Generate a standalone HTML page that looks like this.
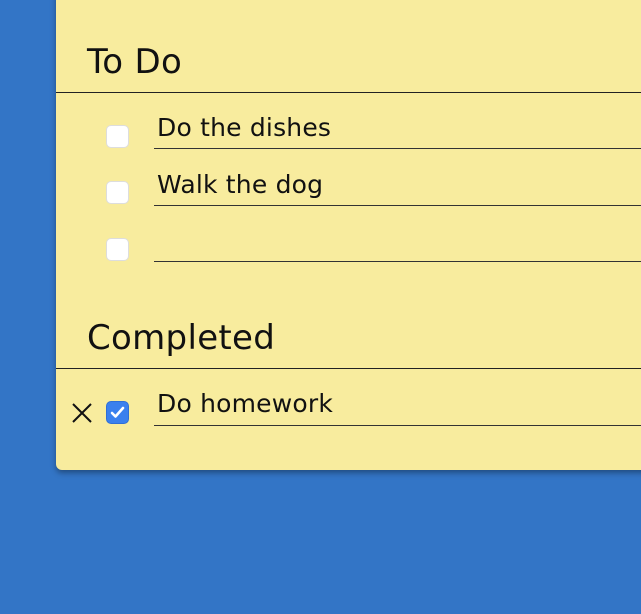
<!DOCTYPE html>
<html><head><style>
body{margin:0;width:641px;height:614px;background:#3375c6;overflow:hidden;position:relative;font-family:"DejaVu Sans",sans-serif;color:#111;}
.panel{position:absolute;left:56px;top:-10px;width:600px;height:480px;background:#f8ec9e;border-radius:6px;box-shadow:0 3px 6px rgba(0,0,0,.35);}
.h{position:absolute;left:87px;font-size:34px;letter-spacing:0.3px;}
.line{position:absolute;left:56px;right:0;height:1px;background:#222;}
.cb{position:absolute;left:106px;width:23px;height:23px;border-radius:5px;background:#fff;border:1px solid #ddd;box-sizing:border-box;}
.t{position:absolute;left:157px;font-size:25px;letter-spacing:0.2px;}
.u{position:absolute;left:154px;right:0;height:1px;background:#333;}
</style></head><body>
<div class="panel"></div>
<div class="h" style="top:42px">To Do</div>
<div class="line" style="top:92px"></div>
<div class="cb" style="top:125px"></div><div class="t" style="top:113px">Do the dishes</div><div class="u" style="top:148px"></div>
<div class="cb" style="top:181px"></div><div class="t" style="top:170px">Walk the dog</div><div class="u" style="top:205px"></div>
<div class="cb" style="top:238px"></div><div class="u" style="top:261px"></div>
<div class="h" style="top:318px">Completed</div>
<div class="line" style="top:368px"></div>
<svg style="position:absolute;left:71px;top:402px" width="22" height="22"><path d="M2 2L20 20M20 2L2 20" stroke="#111" stroke-width="2"/></svg>
<div class="cb" style="top:401px;background:#3a80ee;border-color:#2f6fd6"><svg width="23" height="23" style="position:absolute;left:-1px;top:-1px"><path d="M6 12L9.5 15.5L17 7" stroke="#fff" stroke-width="2.6" fill="none" stroke-linecap="round" stroke-linejoin="round"/></svg></div>
<div class="t" style="top:389px">Do homework</div><div class="u" style="top:425px"></div>
</body></html>
